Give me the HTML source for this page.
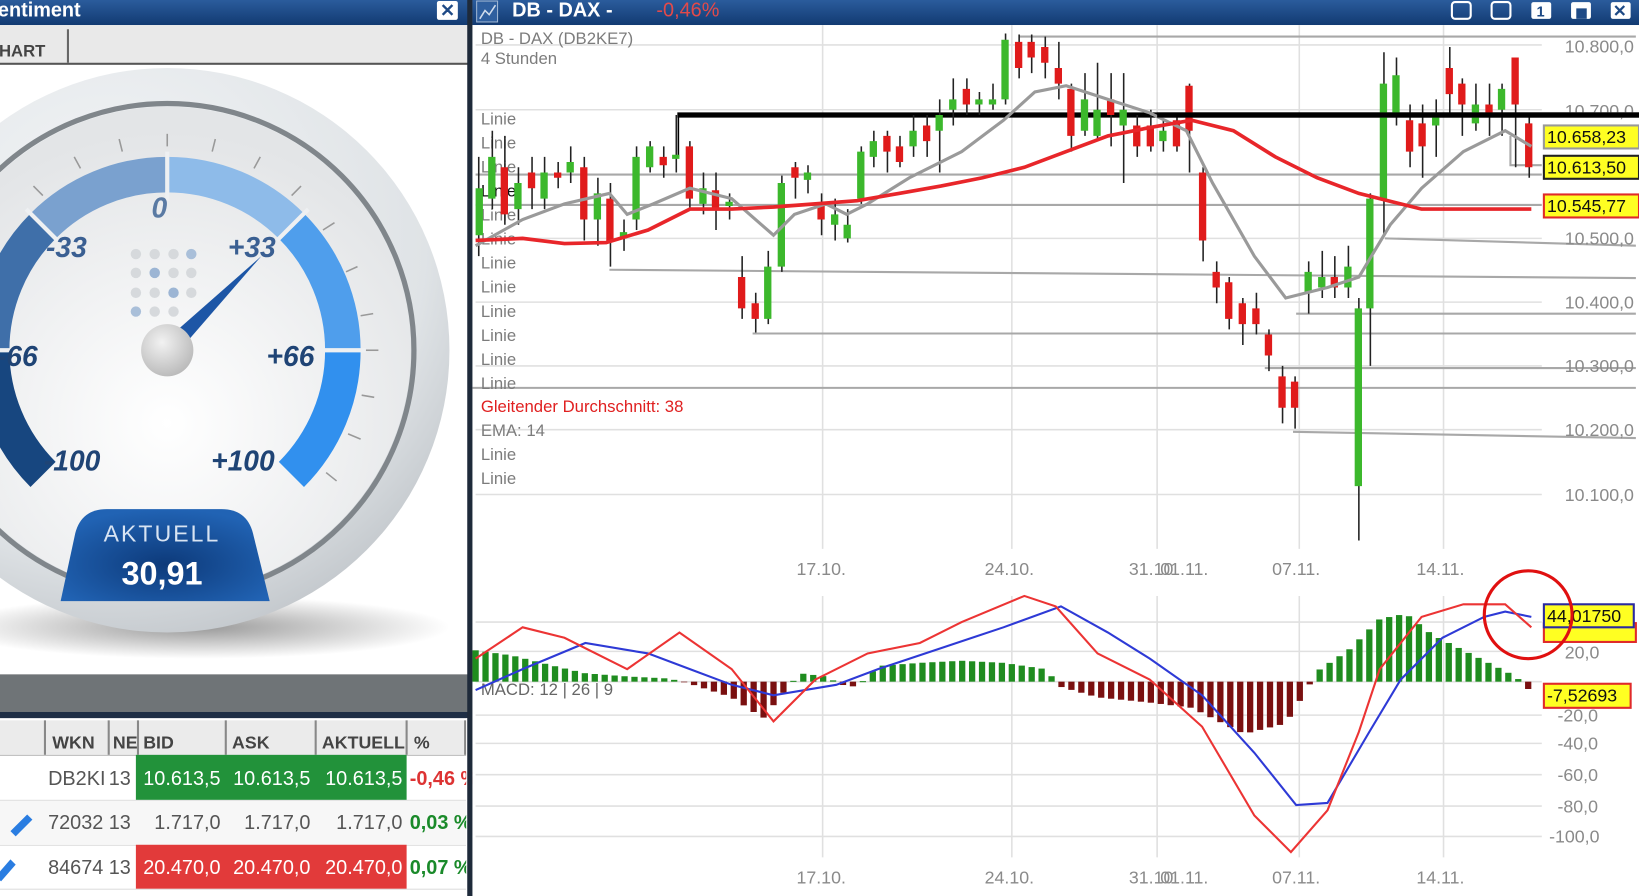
<!DOCTYPE html>
<html><head><meta charset="utf-8"><style>
html,body{margin:0;padding:0;background:#fff;overflow:hidden}
svg{display:block}
text{font-family:"Liberation Sans",sans-serif}
</style></head><body>
<svg width="1639" height="896" viewBox="0 0 1568 857" preserveAspectRatio="none" xmlns="http://www.w3.org/2000/svg">
<defs>
<linearGradient id="tb" x1="0" y1="0" x2="0" y2="1"><stop offset="0" stop-color="#2b5c9c"/><stop offset="1" stop-color="#123a72"/></linearGradient>
<radialGradient id="bez" cx="0.4" cy="0.3" r="0.8"><stop offset="0" stop-color="#f4f6f8"/><stop offset="0.7" stop-color="#dfe3e6"/><stop offset="1" stop-color="#b9bec3"/></radialGradient>
<radialGradient id="face" cx="0.5" cy="0.65" r="0.6"><stop offset="0" stop-color="#ffffff"/><stop offset="1" stop-color="#e3e5e7"/></radialGradient>
<radialGradient id="cap" cx="0.4" cy="0.35" r="0.7"><stop offset="0" stop-color="#f2f2f2"/><stop offset="1" stop-color="#b8b8b8"/></radialGradient>
<radialGradient id="badge" cx="0.5" cy="0.6" r="0.6"><stop offset="0" stop-color="#0d3a7a"/><stop offset="1" stop-color="#2163b4"/></radialGradient>
<radialGradient id="shadow" cx="0.5" cy="0.5" r="0.5"><stop offset="0" stop-color="#555" stop-opacity="0.6"/><stop offset="1" stop-color="#555" stop-opacity="0"/></radialGradient>
<clipPath id="lp"><rect x="0" y="60" width="448" height="585"/></clipPath>
</defs>

<rect x="0" y="0" width="448" height="24" fill="url(#tb)"/>
<text x="-2" y="16" font-size="19" font-weight="bold" fill="#fff">entiment</text>
<rect x="418" y="1" width="20" height="18" rx="2" fill="#fff"/>
<text x="421" y="16" font-size="17" font-weight="bold" fill="#1e4a86">✕</text>
<rect x="0" y="24" width="448" height="36" fill="#e9e9e9"/>
<rect x="0" y="60" width="448" height="2" fill="#555"/>
<rect x="64" y="28" width="2" height="32" fill="#666"/>
<text x="-1" y="54" font-size="16" font-weight="bold" fill="#444">HART</text>

<g clip-path="url(#lp)">
<ellipse cx="190" cy="600" rx="240" ry="30" fill="url(#shadow)"/>
<circle cx="160" cy="335" r="270" fill="url(#bez)"/>
<circle cx="160" cy="335" r="236" fill="none" stroke="#80868b" stroke-width="5"/>
<circle cx="160" cy="335" r="233" fill="url(#face)"/>
<g stroke="#999" stroke-width="1.5">
<line x1="160" y1="128" x2="160" y2="140"/><line x1="206" y1="133" x2="203" y2="145"/><line x1="249" y1="150" x2="243" y2="161"/><line x1="288" y1="178" x2="279" y2="187"/><line x1="320" y1="213" x2="309" y2="220"/><line x1="342" y1="255" x2="331" y2="260"/><line x1="357" y1="300" x2="345" y2="302"/><line x1="362" y1="335" x2="350" y2="335"/><line x1="358" y1="380" x2="346" y2="378"/><line x1="345" y1="420" x2="333" y2="415"/><line x1="322" y1="460" x2="312" y2="452"/><line x1="114" y1="133" x2="117" y2="145"/><line x1="71" y1="150" x2="77" y2="161"/><line x1="32" y1="178" x2="41" y2="187"/>
</g>
<g fill="none" stroke-width="34">
<path d="M41.2,453.8 A168,168 0 0 1 -8,335" stroke="#17467f"/>
<path d="M-8,335 A168,168 0 0 1 41.2,216.2" stroke="#3f6fa9"/>
<path d="M41.2,216.2 A168,168 0 0 1 160,167" stroke="#7aa1cf"/>
<path d="M160,167 A168,168 0 0 1 278.8,216.2" stroke="#8ebbe9"/>
<path d="M278.8,216.2 A168,168 0 0 1 328,335" stroke="#4f9eec"/>
<path d="M328,335 A168,168 0 0 1 278.8,453.8" stroke="#3190ee"/>
</g>
<g stroke="#eef0f2" stroke-width="4">
<line x1="160" y1="145" x2="160" y2="192"/><line x1="25" y1="200" x2="55" y2="230"/><line x1="295" y1="200" x2="265" y2="230"/><line x1="310" y1="335" x2="350" y2="335"/><line x1="-30" y1="335" x2="10" y2="335"/>
</g>
<g font-size="27" font-style="italic" font-weight="bold" fill="#1f4475">
<text x="145" y="208" fill="#5a7aa3">0</text>
<text x="44" y="246" fill="#3a5f92">-33</text>
<text x="218" y="246" fill="#3a5f92">+33</text>
<text x="-3" y="350">-66</text>
<text x="255" y="350">+66</text>
<text x="42" y="450">-100</text>
<text x="202" y="450">+100</text>
</g>
<g fill="#d6d9dc">
<circle cx="130" cy="243" r="5"/><circle cx="148" cy="243" r="5"/><circle cx="166" cy="243" r="5"/><circle cx="183" cy="243" r="5" fill="#a9bfd9"/>
<circle cx="130" cy="261" r="5"/><circle cx="148" cy="261" r="5" fill="#9cb5d4"/><circle cx="166" cy="261" r="5"/><circle cx="183" cy="261" r="5"/>
<circle cx="130" cy="280" r="5"/><circle cx="148" cy="280" r="5"/><circle cx="166" cy="280" r="5" fill="#9cb5d4"/><circle cx="183" cy="280" r="5"/>
<circle cx="130" cy="298" r="5" fill="#a9bfd9"/><circle cx="148" cy="298" r="5"/><circle cx="166" cy="298" r="5"/>
</g>
<polygon points="250,245 178,328 167,318" fill="#1d56a6"/>
<circle cx="160" cy="335" r="25" fill="url(#cap)"/>
<path d="M58,575 L72,510 Q78,487 102,487 L212,487 Q236,487 242,510 L258,575 Z" fill="url(#badge)"/>
<text x="155" y="518" font-size="22" text-anchor="middle" fill="#d8e4f3" letter-spacing="2">AKTUELL</text>
<text x="155" y="559" font-size="31" font-weight="bold" text-anchor="middle" fill="#fff">30,91</text>
</g>

<rect x="0" y="645" width="448" height="36" fill="#6f7477"/>
<rect x="0" y="681" width="448" height="6" fill="#1e2e45"/>
<rect x="0" y="687" width="448" height="170" fill="#fff"/>
<rect x="0" y="689" width="446" height="33" fill="#ebebeb"/>
<g fill="#888"><rect x="42" y="689" width="2" height="33"/><rect x="103" y="689" width="2" height="33"/><rect x="131" y="689" width="2" height="33"/><rect x="215" y="689" width="2" height="33"/><rect x="301" y="689" width="2" height="33"/><rect x="388" y="689" width="2" height="33"/><rect x="444" y="689" width="2" height="33"/></g>
<g font-size="17" font-weight="bold" fill="#444">
<text x="50" y="716">WKN</text><text x="108" y="716">NE</text><text x="137" y="716">BID</text><text x="222" y="716">ASK</text><text x="308" y="716">AKTUELL</text><text x="396" y="716">%</text>
</g>
<rect x="0" y="722" width="446" height="1" fill="#bbb"/>
<rect x="0" y="765" width="446" height="1" fill="#ddd"/>
<rect x="0" y="808" width="446" height="1" fill="#ddd"/>
<rect x="0" y="850" width="446" height="1" fill="#ddd"/>
<rect x="0" y="766" width="446" height="42" fill="#f7f7f7"/>
<rect x="130" y="722" width="259" height="43" fill="#22923a"/>
<rect x="130" y="808" width="259" height="42" fill="#e23a3a"/>
<g font-size="19" fill="#555">
<text x="46" y="751">DB2KI</text><text x="104" y="751">13</text>
<text x="46" y="793">72032</text><text x="104" y="793">13</text>
<text x="46" y="836">84674</text><text x="104" y="836">13</text>
</g>
<g font-size="19" fill="#fff" text-anchor="end">
<text x="211" y="751">10.613,5</text><text x="297" y="751">10.613,5</text><text x="385" y="751">10.613,5</text>
<text x="211" y="836">20.470,0</text><text x="297" y="836">20.470,0</text><text x="385" y="836">20.470,0</text>
</g>
<g font-size="19" fill="#555" text-anchor="end">
<text x="211" y="793">1.717,0</text><text x="297" y="793">1.717,0</text><text x="385" y="793">1.717,0</text>
</g>
<g font-size="19" font-weight="bold">
<text x="392" y="751" fill="#d33">-0,46 %</text>
<text x="392" y="793" fill="#1a8a2a">0,03 %</text>
<text x="392" y="836" fill="#1a8a2a">0,07 %</text>
</g>
<path d="M10,795 L26,779 L31,784 L15,800 Z" fill="#2a7de1"/>
<path d="M-4,838 L10,822 L15,827 L1,843 Z" fill="#2a7de1"/>
<rect x="446" y="687" width="2" height="170" fill="#fff"/>

<rect x="447" y="0" width="5" height="857" fill="#1e2a3a"/>

<rect x="452" y="0" width="1116" height="24" fill="url(#tb)"/>
<rect x="456" y="1" width="20" height="20" fill="#2f5f9f" stroke="#9fb6d4"/>
<path d="M459,18 L464,10 L468,14 L474,5" stroke="#d0dcec" stroke-width="1.5" fill="none"/>
<text x="490" y="16" font-size="19" font-weight="bold" fill="#fff">DB - DAX -</text>
<text x="628" y="16" font-size="19" fill="#e24a4a">-0,46%</text>
<g fill="none" stroke="#fff" stroke-width="2">
<rect x="1389" y="2" width="18" height="16" rx="3"/><rect x="1427" y="2" width="18" height="16" rx="3"/>
</g>
<rect x="1465" y="2" width="19" height="16" rx="2" fill="#fff"/><text x="1470" y="16" font-size="14" font-weight="bold" fill="#1e4a86">1</text>
<rect x="1503" y="2" width="19" height="16" rx="2" fill="#fff"/><rect x="1508" y="8" width="10" height="10" fill="#1e4a86"/>
<rect x="1541" y="2" width="19" height="16" rx="2" fill="#fff"/><text x="1543" y="16" font-size="16" font-weight="bold" fill="#1e4a86">✕</text>
<rect x="452" y="24" width="1116" height="833" fill="#fff"/>

<g stroke="#e0e0e0" stroke-width="1.5">
<line x1="787" y1="24" x2="787" y2="525"/><line x1="968" y1="24" x2="968" y2="525"/><line x1="1107" y1="24" x2="1107" y2="525"/><line x1="1243" y1="24" x2="1243" y2="525"/><line x1="1381" y1="24" x2="1381" y2="525"/>
<line x1="787" y1="570" x2="787" y2="820"/><line x1="968" y1="570" x2="968" y2="820"/><line x1="1107" y1="570" x2="1107" y2="820"/><line x1="1243" y1="570" x2="1243" y2="820"/><line x1="1381" y1="570" x2="1381" y2="820"/>
<line x1="455" y1="43" x2="1475" y2="43"/><line x1="455" y1="105" x2="1475" y2="105"/><line x1="455" y1="167" x2="1475" y2="167"/><line x1="455" y1="228" x2="1475" y2="228"/><line x1="455" y1="289" x2="1475" y2="289"/><line x1="455" y1="350" x2="1475" y2="350"/><line x1="455" y1="411" x2="1475" y2="411"/><line x1="455" y1="473" x2="1475" y2="473"/>
<line x1="455" y1="595" x2="1475" y2="595"/><line x1="455" y1="623" x2="1475" y2="623"/><line x1="455" y1="652" x2="1475" y2="652"/><line x1="455" y1="684" x2="1475" y2="684"/><line x1="455" y1="711" x2="1475" y2="711"/><line x1="455" y1="741" x2="1475" y2="741"/><line x1="455" y1="771" x2="1475" y2="771"/><line x1="455" y1="800" x2="1475" y2="800"/>
</g>
<g stroke="#a8a8a8" stroke-width="2" fill="none">
<line x1="975" y1="35" x2="1565" y2="35"/>
<line x1="455" y1="167" x2="1475" y2="167"/><line x1="455" y1="196" x2="1475" y2="196"/>
<line x1="1325" y1="228" x2="1565" y2="235"/><line x1="583" y1="258" x2="1565" y2="266"/>
<line x1="1240" y1="300" x2="1565" y2="300"/><line x1="720" y1="319" x2="1565" y2="319"/>
<line x1="1210" y1="352" x2="1565" y2="352"/><line x1="452" y1="371" x2="1565" y2="371"/>
<line x1="1237" y1="413" x2="1565" y2="419"/>
<path d="M1445,130 V158 H1475"/>
</g>
<line x1="648" y1="110" x2="1568" y2="110" stroke="#000" stroke-width="5"/>
<line x1="649" y1="110" x2="649" y2="150" stroke="#000" stroke-width="1.5"/>

<g font-size="16" fill="#7c7c7c">
<text x="460" y="42">DB - DAX (DB2KE7)</text><text x="460" y="61">4 Stunden</text>
<text x="460" y="119">Linie</text><text x="460" y="142">Linie</text><text x="460" y="165">Linie</text><text x="460" y="188" fill="#111">Linie</text><text x="460" y="211">Linie</text><text x="460" y="234">Linie</text><text x="460" y="257">Linie</text><text x="460" y="280">Linie</text><text x="460" y="303">Linie</text><text x="460" y="326">Linie</text><text x="460" y="349">Linie</text><text x="460" y="372">Linie</text>
<text x="460" y="394" fill="#e02020">Gleitender Durchschnitt: 38</text>
<text x="460" y="417">EMA: 14</text><text x="460" y="440">Linie</text><text x="460" y="463">Linie</text>
<text x="460" y="665" fill="#666">MACD: 12 | 26 | 9</text>
</g>

<path stroke="#222" stroke-width="1.5" fill="none" d="M458,150V245M471,125V200M483,130V215M496,160V215M509,150V200M521,150V200M534,155V180M546,140V175M559,150V230M572,170V235M584,175V255M597,210V240M609,140V220M622,135V165M635,140V170M647,110V165M660,135V200M673,165V205M685,165V220M698,185V210M710,245V305M723,280V318M735,240V310M748,168V260M761,155V190M773,158V185M786,185V225M799,190V230M811,200V232M824,140V195M836,125V160M849,125V165M861,130V160M874,110V150M887,110V150M899,95V165M912,75V120M925,75V110M937,88V110M950,80V105M962,32V100M975,33V75M987,33V70M1000,35V75M1013,40V95M1025,80V145M1038,70V130M1050,60V135M1063,70V140M1075,70V175M1088,110V150M1101,105V145M1113,115V145M1126,110V145M1138,80V165M1151,160V250M1164,250V290M1176,265V315M1189,285V330M1202,280V320M1214,315V355M1227,350V405M1239,360V410M1252,250V300M1265,240V285M1277,245V285M1290,235V285M1300,285V517M1311,185V350M1324,50V225M1336,55V120M1349,100V160M1361,100V170M1374,95V150M1387,45V110M1399,75V130M1412,80V125M1425,80V130M1437,80V130M1450,55V160M1463,110V170"/>
<path fill="#3cb82c" d="M455,180h7v45h-7zM467,150h7v40h-7zM492,175h7v25h-7zM517,165h7v25h-7zM542,155h7v10h-7zM568,185h7v25h-7zM593,222h7v6h-7zM605,150h7v60h-7zM618,140h7v20h-7zM643,148h7v4h-7zM669,180h7v15h-7zM694,193h7v4h-7zM731,255h7v50h-7zM744,175h7v80h-7zM769,165h7v7h-7zM795,205h7v10h-7zM807,215h7v13h-7zM820,145h7v45h-7zM832,135h7v15h-7zM870,125h7v15h-7zM895,110h7v15h-7zM908,95h7v10h-7zM933,95h7v5h-7zM946,95h7v5h-7zM958,38h7v57h-7zM1034,95h7v30h-7zM1046,105h7v25h-7zM1071,105h7v15h-7zM1109,125h7v10h-7zM1248,260h7v20h-7zM1261,265h7v10h-7zM1286,255h7v20h-7zM1296,295h7v170h-7zM1307,190h7v105h-7zM1320,80h7v110h-7zM1332,72h7v38h-7zM1370,110h7v10h-7zM1408,100h7v18h-7zM1433,85h7v20h-7z"/>
<path fill="#e01b1b" d="M479,160h7v45h-7zM505,165h7v15h-7zM530,165h7v5h-7zM555,160h7v50h-7zM580,190h7v40h-7zM631,150h7v8h-7zM656,140h7v50h-7zM681,182h7v18h-7zM706,265h7v30h-7zM719,290h7v15h-7zM757,160h7v10h-7zM782,195h7v15h-7zM845,130h7v15h-7zM857,140h7v15h-7zM883,120h7v15h-7zM921,85h7v15h-7zM971,40h7v25h-7zM983,40h7v15h-7zM996,45h7v15h-7zM1009,65h7v15h-7zM1021,85h7v45h-7zM1059,95h7v15h-7zM1084,120h7v20h-7zM1097,120h7v20h-7zM1122,115h7v25h-7zM1134,82h7v43h-7zM1147,165h7v65h-7zM1160,260h7v15h-7zM1172,270h7v35h-7zM1185,290h7v20h-7zM1198,295h7v15h-7zM1210,320h7v20h-7zM1223,360h7v30h-7zM1235,365h7v25h-7zM1273,265h7v10h-7zM1345,115h7v30h-7zM1357,118h7v22h-7zM1383,65h7v25h-7zM1395,80h7v20h-7zM1421,100h7v10h-7zM1446,55h7v45h-7zM1459,118h7v42h-7z"/>

<polyline fill="none" stroke="#9a9a9a" stroke-width="3" points="455,235 500,210 540,195 583,185 600,205 625,195 660,180 700,190 740,225 760,205 790,195 810,205 830,195 870,170 920,145 960,115 990,88 1020,82 1060,95 1100,108 1135,125 1160,175 1200,245 1230,285 1270,275 1300,265 1330,215 1360,180 1400,145 1440,125 1465,140"/>
<polyline fill="none" stroke="#e8262a" stroke-width="3.5" points="455,230 500,228 540,233 580,232 620,220 660,200 700,200 740,198 780,195 820,192 860,185 900,178 940,170 980,160 1020,145 1060,130 1100,122 1140,115 1180,125 1220,150 1260,170 1300,185 1340,195 1360,200 1400,200 1465,200"/>

<g font-size="17" fill="#8a8a8a">
<text x="1497" y="50">10.800,0</text><text x="1497" y="112">10.700,0</text><text x="1497" y="234">10.500,0</text><text x="1497" y="295">10.400,0</text><text x="1497" y="356">10.300,0</text><text x="1497" y="417">10.200,0</text><text x="1497" y="479">10.100,0</text>
<text x="762" y="550">17.10.</text><text x="942" y="550">24.10.</text><text x="1080" y="550">31.10</text><text x="1110" y="550">01.11.</text><text x="1217" y="550">07.11.</text><text x="1355" y="550">14.11.</text>
<text x="762" y="845">17.10.</text><text x="942" y="845">24.10.</text><text x="1080" y="845">31.10</text><text x="1110" y="845">01.11.</text><text x="1217" y="845">07.11.</text><text x="1355" y="845">14.11.</text>
<text x="1497" y="630">20,0</text><text x="1490" y="690">-20,0</text><text x="1490" y="717">-40,0</text><text x="1490" y="747">-60,0</text><text x="1490" y="777">-80,0</text><text x="1482" y="806">-100,0</text>
</g>
<line x1="1107" y1="110" x2="1568" y2="110" stroke="#000" stroke-width="5"/>
<g font-size="17" fill="#111">
<rect x="1477" y="120" width="91" height="22" fill="#ffff22" stroke="#999" stroke-width="2"/><text x="1480" y="137">10.658,23</text>
<rect x="1477" y="149" width="91" height="22" fill="#ffff22" stroke="#222" stroke-width="2"/><text x="1480" y="166">10.613,50</text>
<rect x="1477" y="186" width="91" height="22" fill="#ffff22" stroke="#e02a2a" stroke-width="2"/><text x="1480" y="203">10.545,77</text>
<rect x="1477" y="596" width="88" height="18" fill="#ffff22" stroke="#e02a2a" stroke-width="2"/>
<rect x="1477" y="578" width="86" height="22" fill="#ffff22" stroke="#2a2aa0" stroke-width="2"/><text x="1480" y="595">44,01750</text>
<rect x="1477" y="654" width="83" height="23" fill="#ffff22" stroke="#e02a2a" stroke-width="2"/><text x="1480" y="671">-7,52693</text>
</g>

<g id="hist"></g>
<polyline fill="none" stroke="#2e3ad6" stroke-width="2" points="455,660 500,640 560,615 620,625 660,640 700,655 740,665 800,655 840,640 900,620 960,600 1015,580 1060,605 1100,630 1150,665 1200,720 1240,770 1270,768 1310,700 1340,650 1380,610 1420,590 1440,585 1465,590"/>
<polyline fill="none" stroke="#ec3434" stroke-width="2" points="455,630 500,600 540,610 600,640 650,605 700,640 740,690 780,650 830,625 880,615 920,595 980,570 1010,580 1050,625 1100,650 1150,695 1200,780 1235,815 1270,775 1300,700 1320,640 1360,590 1400,578 1440,578 1465,600"/>
<circle cx="1462" cy="588" r="42" fill="none" stroke="#e01010" stroke-width="3"/>
</svg>
<script>
(function(){
var k=[[455,30],[490,25],[530,15],[560,8],[600,5],[640,3],[660,-2],[700,-15],[730,-35],[750,-10],[765,8],[790,5],[805,-3],[820,-5],[840,15],[880,18],[920,20],[960,18],[1000,12],[1015,-5],[1050,-15],[1100,-20],[1140,-25],[1190,-50],[1230,-40],[1250,-8],[1260,10],[1290,30],[1320,60],[1345,65],[1370,45],[1400,30],[1430,15],[1450,5],[1463,-8]];
function h(x){for(var i=1;i<k.length;i++){if(x<=k[i][0]){var a=k[i-1],b=k[i];return a[1]+(b[1]-a[1])*(x-a[0])/(b[0]-a[0]);}}return -8;}
var g=document.getElementById('hist'),ns='http://www.w3.org/2000/svg',z=652;
for(var x=455;x<=1463;x+=9.5){var v=h(x),r=document.createElementNS(ns,'rect');r.setAttribute('x',x-3);r.setAttribute('width',6);
if(v>=0){r.setAttribute('y',z-v);r.setAttribute('height',Math.max(v,1));r.setAttribute('fill','#1f8c1f');}else{r.setAttribute('y',z);r.setAttribute('height',-v);r.setAttribute('fill','#7a1010');}
g.appendChild(r);}
})();
</script>
</body></html>
